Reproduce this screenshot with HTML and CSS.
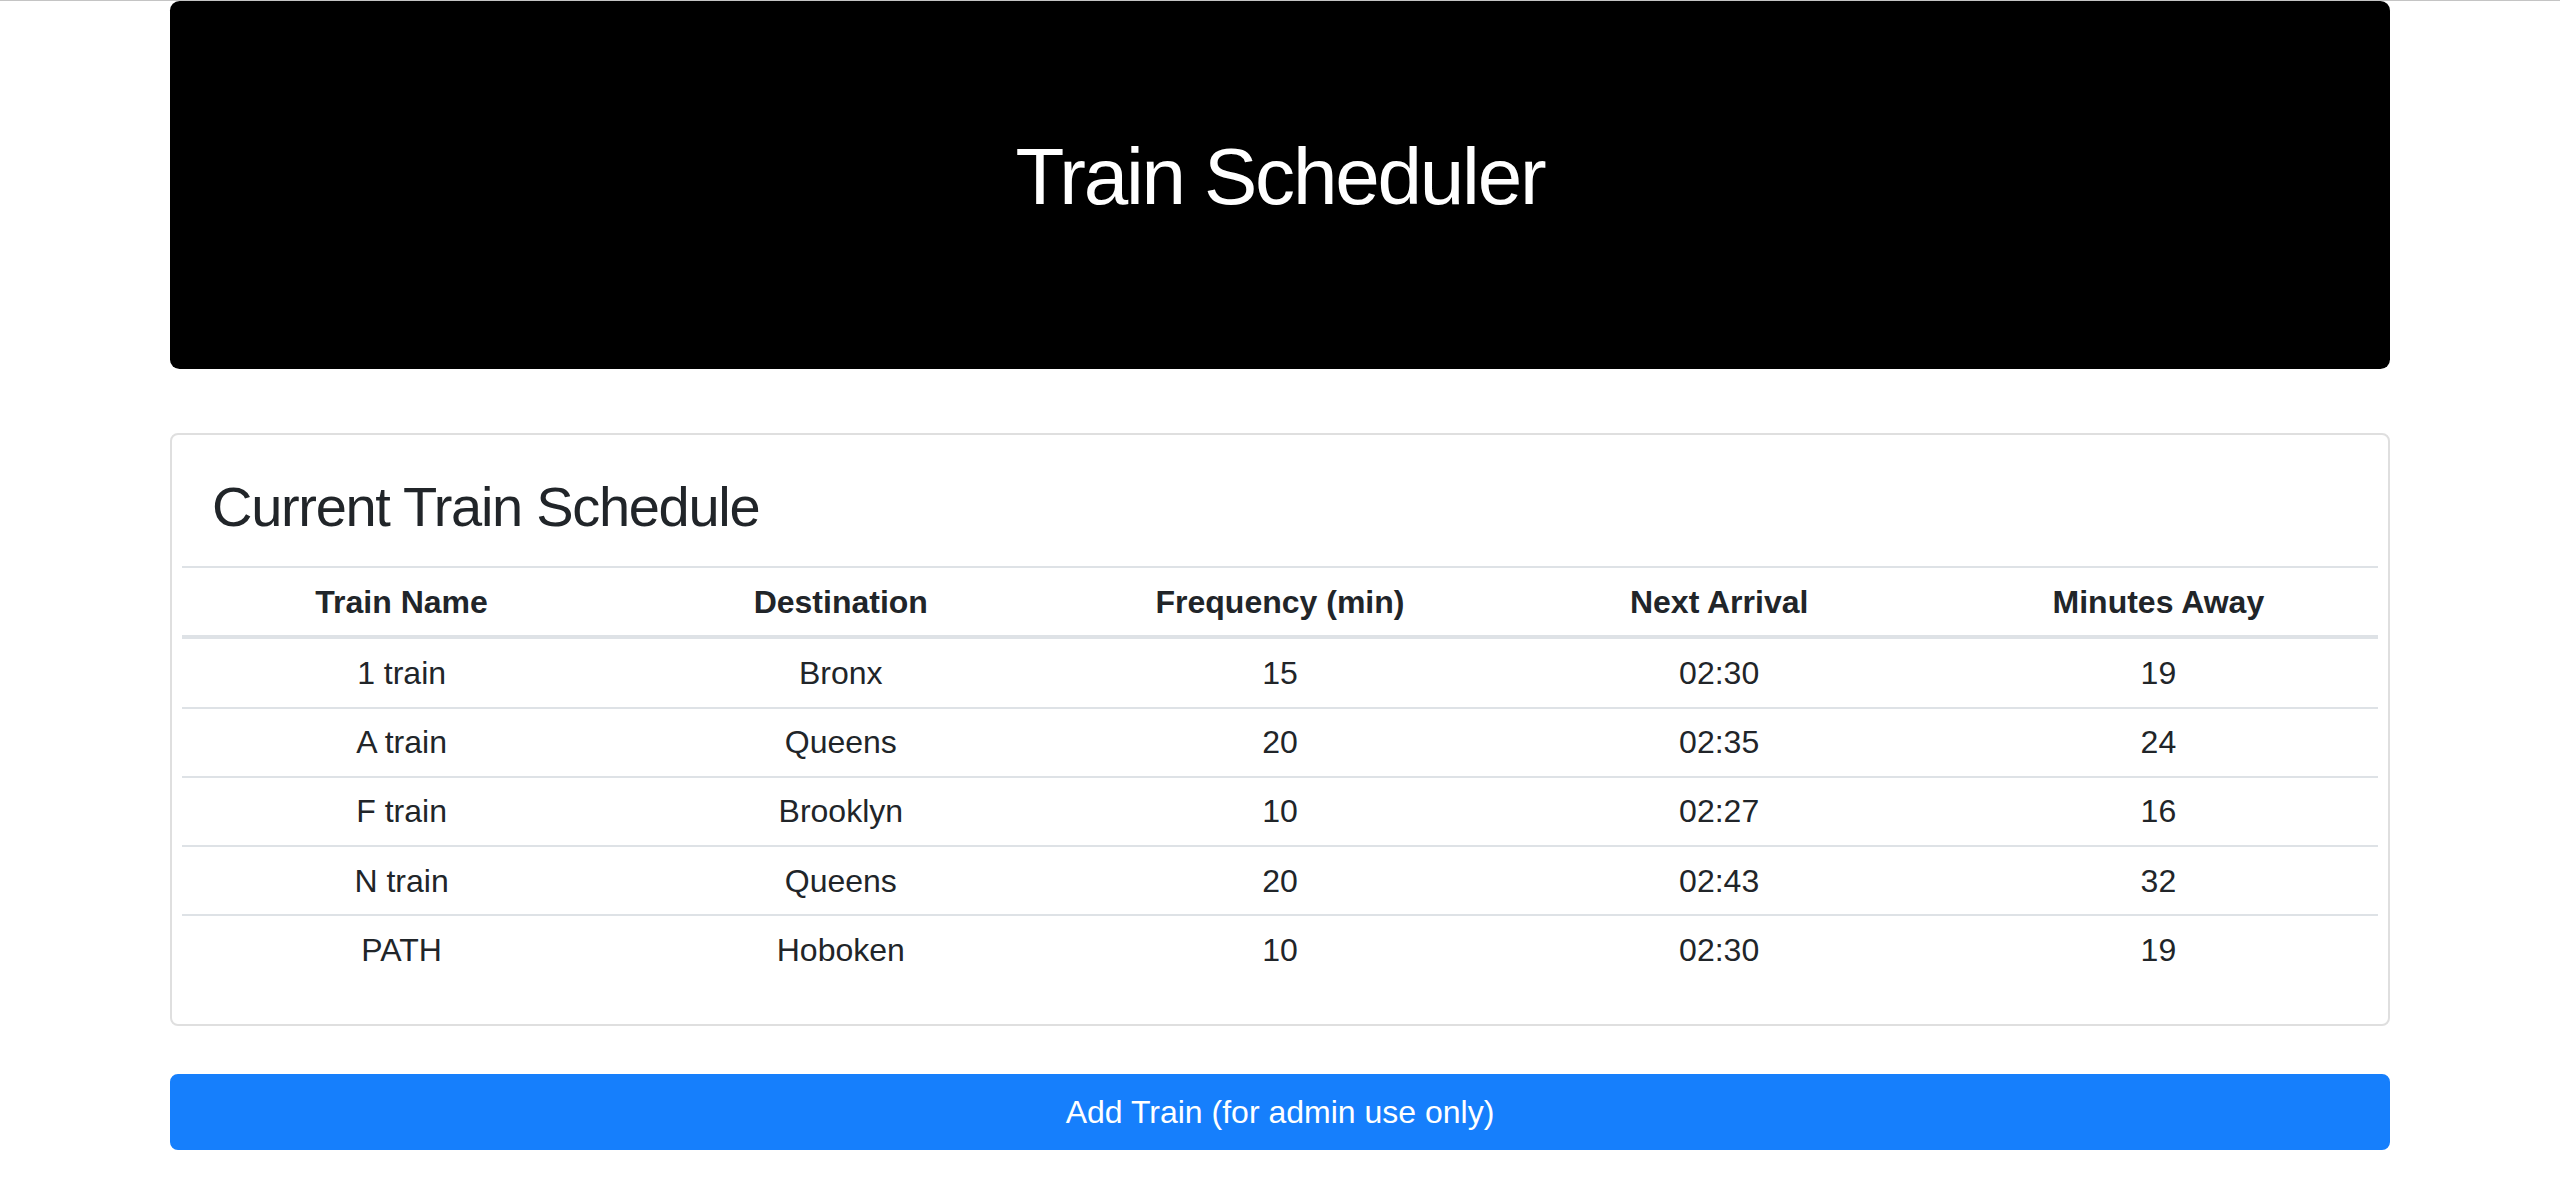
FILE: index.html
```html
<!DOCTYPE html>
<html lang="en">
<head>
<meta charset="utf-8">
<title>Train Scheduler</title>
<link rel="stylesheet" href="styles.css">
</head>
<body>
<div class="container">
  <header class="jumbotron">
    <h1 class="title">Train Scheduler</h1>
  </header>
  <section class="card">
    <h3 class="card-title">Current Train Schedule</h3>
    <table class="schedule">
      <thead>
        <tr>
          <th>Train Name</th>
          <th>Destination</th>
          <th>Frequency (min)</th>
          <th>Next Arrival</th>
          <th>Minutes Away</th>
        </tr>
      </thead>
      <tbody>
        <tr><td>1 train</td><td>Bronx</td><td>15</td><td>02:30</td><td>19</td></tr>
        <tr><td>A train</td><td>Queens</td><td>20</td><td>02:35</td><td>24</td></tr>
        <tr><td>F train</td><td>Brooklyn</td><td>10</td><td>02:27</td><td>16</td></tr>
        <tr><td>N train</td><td>Queens</td><td>20</td><td>02:43</td><td>32</td></tr>
        <tr><td>PATH</td><td>Hoboken</td><td>10</td><td>02:30</td><td>19</td></tr>
      </tbody>
    </table>
  </section>
  <button class="btn-primary" type="button">Add Train (for admin use only)</button>
</div>
</body>
</html>
```

FILE: styles.css
```css
html, body {
  margin: 0;
  padding: 0;
  background: #ffffff;
}
body {
  border-top: 1px solid #c4c4c4;
  font-family: "Liberation Sans", Arial, sans-serif;
  font-size: 32px;
  line-height: 1.5;
  color: #212529;
}
.container {
  width: 2220px;
  margin: 0 auto;
}
.jumbotron {
  background: #000000;
  border-radius: 9.6px;
  padding: 128px 64px;
  margin-bottom: 64px;
}
.title {
  margin: 0 0 16px 0;
  font-size: 80px;
  font-weight: 400;
  line-height: 1.2;
  letter-spacing: -2.2px;
  color: #ffffff;
  text-align: center;
}
.card {
  border: 2px solid #dfdfdf;
  border-radius: 8px;
  padding: 0 10px 10px 10px;
}
.card-title {
  margin: 38px 0 26px 0;
  padding-left: 30px;
  font-size: 56px;
  font-weight: 400;
  line-height: 1.2;
  letter-spacing: -1.3px;
}
.schedule {
  width: 100%;
  table-layout: fixed;
  border-collapse: collapse;
  margin-bottom: 31px;
}
.schedule th,
.schedule td {
  padding: 9.6px;
  text-align: center;
  line-height: 48px;
  vertical-align: top;
}
.schedule th {
  font-weight: 700;
  border-top: 2px solid #dee2e6;
  border-bottom: 4px solid #dee2e6;
}
.schedule td {
  border-top: 2px solid #dee2e6;
}
.schedule tbody tr:first-child td {
  border-top: 4px solid #dee2e6;
}
.btn-primary {
  display: block;
  width: 100%;
  margin-top: 48px;
  padding: 12px 24px;
  border: 2px solid #167ffc;
  border-radius: 8px;
  background: #167ffc;
  color: #ffffff;
  font-family: "Liberation Sans", Arial, sans-serif;
  font-size: 32px;
  line-height: 48px;
  text-align: center;
}
```
